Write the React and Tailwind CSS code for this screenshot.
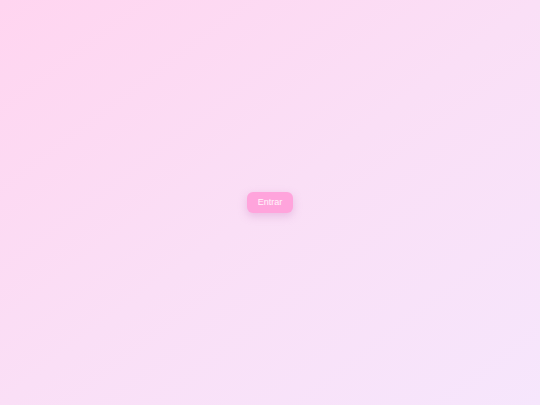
export default function App() {
  return (
    <div className="flex h-[405px] w-[540px] items-center justify-center bg-gradient-to-br from-[#ffd5f0] via-[#fadff6] to-[#f6e6fc]">
      <button
        className="h-[21px] w-[46px] rounded-[6px] bg-[#ffa4dc] text-[9px] text-white/90 shadow-[0_3px_8px_rgba(200,120,190,0.35)]"
        style={{ fontFamily: '"Liberation Sans", Arial, sans-serif' }}
      >
        Entrar
      </button>
    </div>
  );
}
